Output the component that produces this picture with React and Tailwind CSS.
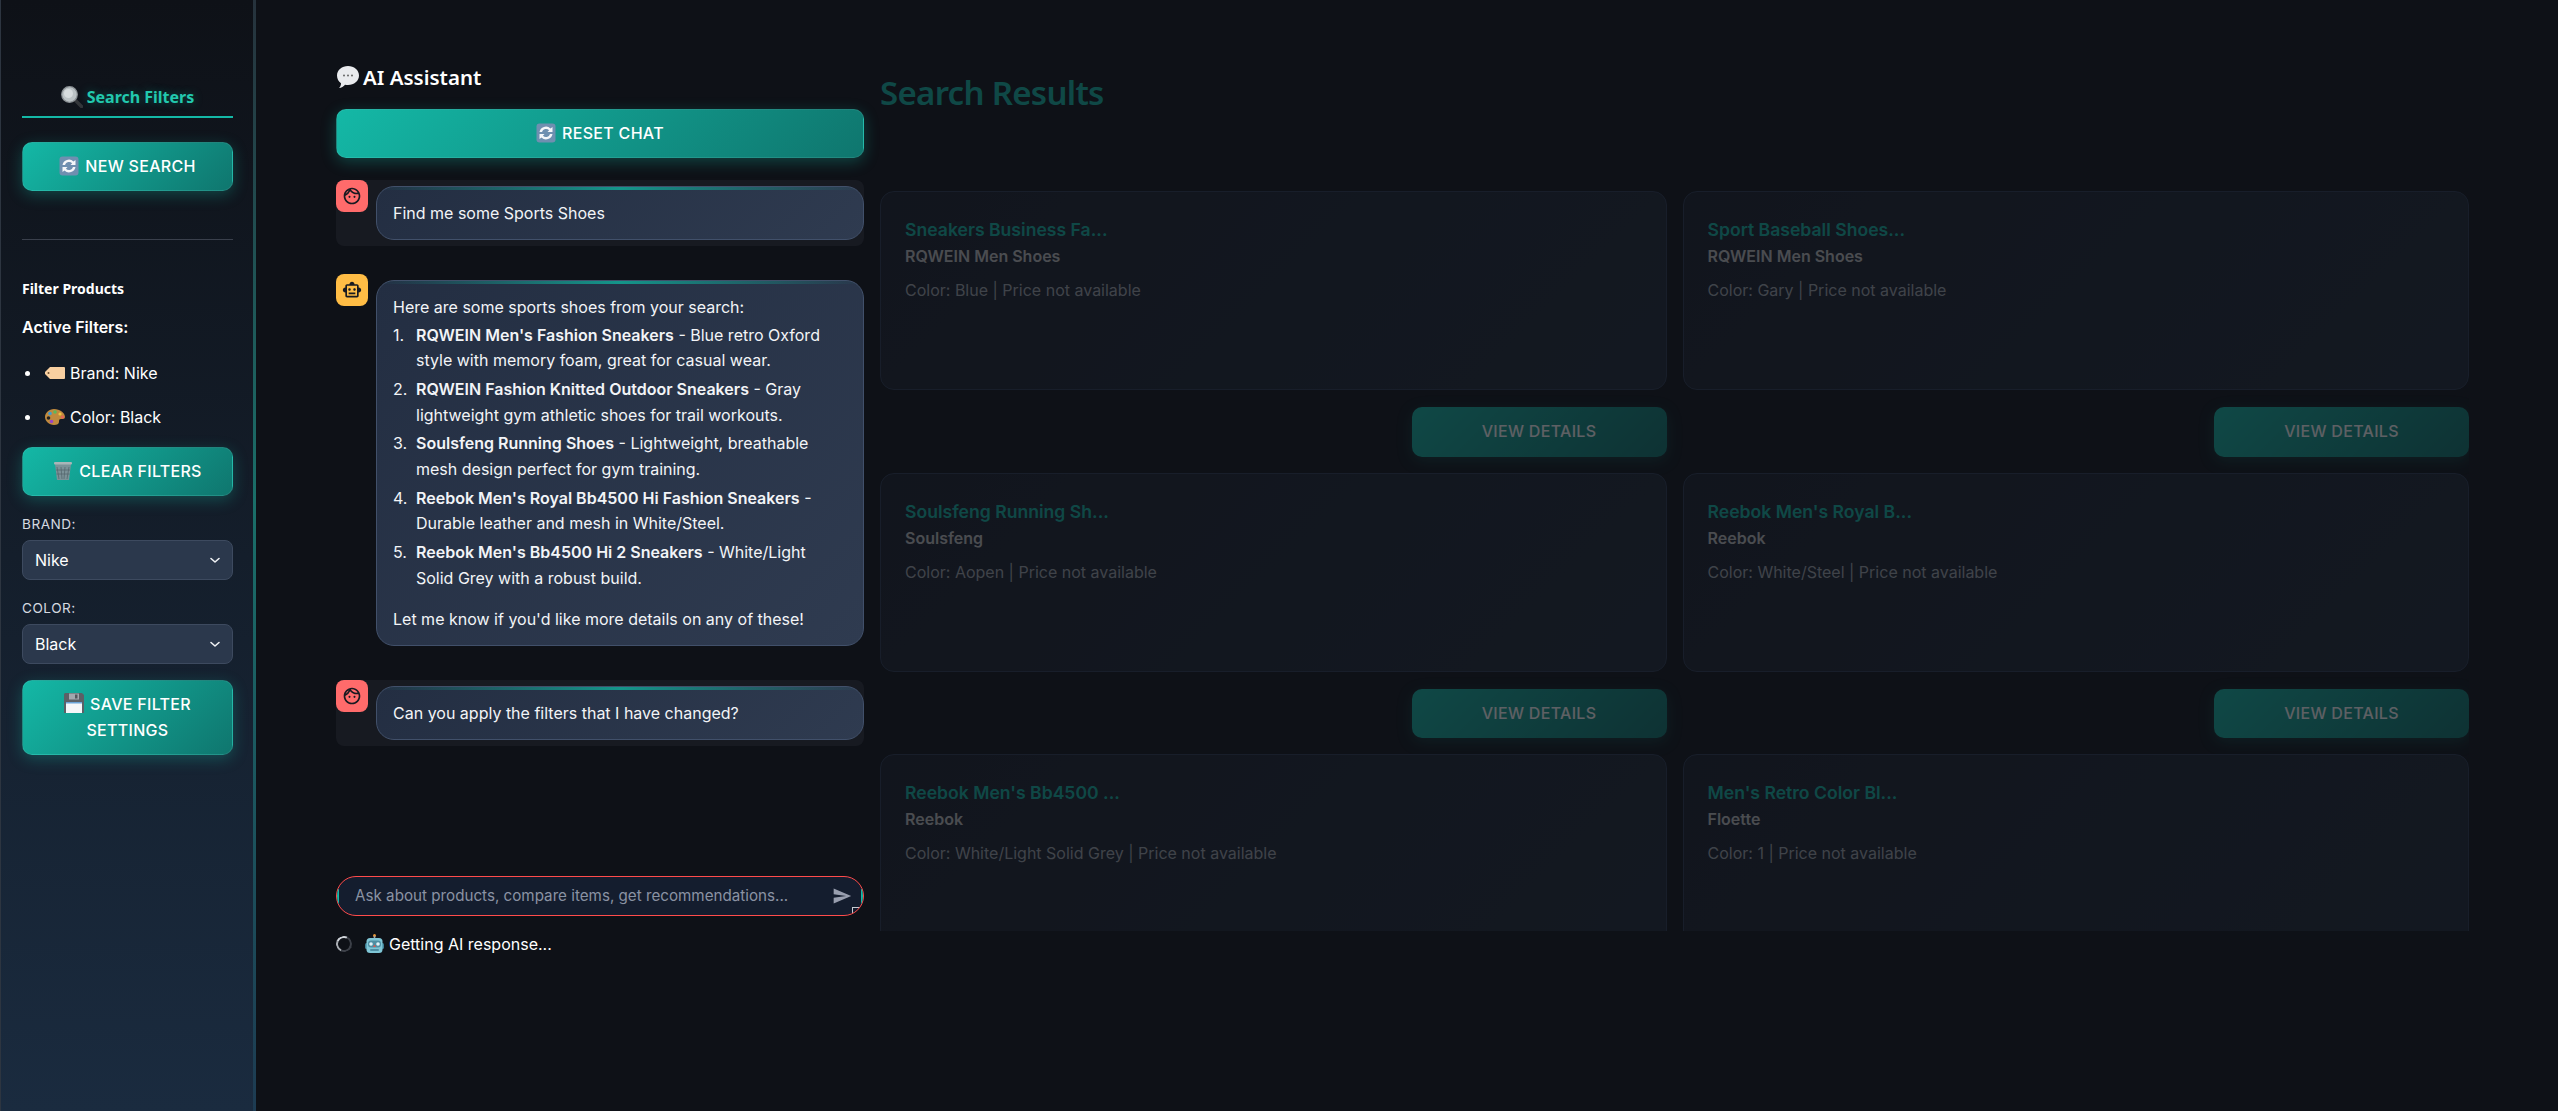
import React from "react";
import { MdOutlineFace, MdOutlineSmartToy, MdSend } from "react-icons/md";

const inter = "font-['Inter',sans-serif]";
const noto = "font-['Noto_Sans',sans-serif]";

const Refresh = () => (
  <svg width="20" height="20" viewBox="0 0 20 20" className="inline-block align-[-4px] mr-[6px]">
    <rect x="0.5" y="0.5" width="19" height="19" rx="3" fill="#6f8fb0" />
    <path d="M3.500 9a6.500 6.500 0 0 1 11-3.500L16.500 4v5h-5l1.600-1.700A4.200 4.200 0 0 0 6 9z" fill="#f4f6f9" />
    <path d="M16.500 11a6.500 6.500 0 0 1-11 3.500L3.500 16v-5h5l-1.600 1.700A4.200 4.200 0 0 0 14 11z" fill="#f4f6f9" />
  </svg>
);
const Magnifier = () => (
  <svg width="22" height="22" viewBox="0 0 22 22" className="shrink-0 mr-[4px]">
    <path d="M13.500 13.500l7 7" stroke="#33363a" strokeWidth="3.500" strokeLinecap="round" />
    <circle cx="8.500" cy="8.500" r="7.800" fill="#bcc3c6" stroke="#8b9195" strokeWidth="1.200" />
    <circle cx="7.500" cy="7.500" r="4.500" fill="#d7dcde" />
  </svg>
);
const Tag = () => (
  <svg width="20" height="14" viewBox="0 0 20 14" className="inline-block align-[-1px] mr-[5px]">
    <path d="M5 1h14a1 1 0 0 1 1 1v10a1 1 0 0 1-1 1H5L0 8V6z" fill="#f8cfa0" />
    <circle cx="3.500" cy="7" r="1" fill="#6b4d2b" />
  </svg>
);
const Palette = () => (
  <svg width="20" height="16" viewBox="0 0 20 16" className="inline-block align-[-2px] mr-[5px]">
    <path d="M9 0c6 0 11 4 11 8 0 2-2 2-4 2s-2 1-2 3-2 3-5 3C4 16 0 12 0 8s4-8 9-8z" fill="#c08a3e" />
    <circle cx="5" cy="4.500" r="1.800" fill="#3f9ad6" />
    <circle cx="10" cy="3" r="1.800" fill="#5cb85c" />
    <circle cx="15" cy="5" r="1.600" fill="#f0c040" />
    <circle cx="3.500" cy="9" r="1.800" fill="#222" />
    <circle cx="6.500" cy="12.500" r="1.800" fill="#9a45c4" />
    <circle cx="17.500" cy="8" r="1.500" fill="#e8645a" />
  </svg>
);
const Trash = () => (
  <svg width="20" height="20" viewBox="0 0 20 20" className="inline-block align-[-4px] mr-[6px]">
    <path d="M2 3h16l-2 16H4z" fill="#7b9298" />
    <rect x="1" y="1" width="18" height="2.500" rx="1" fill="#a9b5b8" />
    <path d="M4 6l2 12M8 6l1 12M12 6l-1 12M16 6l-2 12M3 9h14M3.500 13h13" stroke="#56686e" strokeWidth="0.800" fill="none" />
  </svg>
);
const Floppy = () => (
  <svg width="20" height="20" viewBox="0 0 20 20" className="inline-block align-[-3px] mr-[6px]">
    <path d="M1 0h17l2 2v18H0V1z" fill="#5c6066" />
    <rect x="5" y="0.500" width="10" height="6" fill="#a3a8ae" />
    <rect x="11" y="1.500" width="2.500" height="4" fill="#55595e" />
    <rect x="2" y="9" width="16" height="11" fill="#f5f6f8" />
    <rect x="2" y="9" width="16" height="1.500" fill="#6ca4d8" />
  </svg>
);
const Bubble = () => (
  <svg width="24" height="24" viewBox="0 0 24 24" className="inline-block align-[-4px] mr-[3px]">
    <path d="M12 1c6 0 11 4 11 9.500S18 20 12 20c-1 0-2 0-3-.3C7.500 21.500 5.500 23 3 23c1.500-1.300 2-3 2-4.700C2.500 16.500 1 13.700 1 10.500 1 5 6 1 12 1z" fill="#e9ebee" />
    <circle cx="8" cy="10.500" r="1" fill="#666" />
    <circle cx="12" cy="10.500" r="1" fill="#666" />
    <circle cx="16" cy="10.500" r="1" fill="#666" />
  </svg>
);
const Robot = () => (
  <svg width="19" height="20" viewBox="0 0 19 20" className="shrink-0">
    <circle cx="9.500" cy="1.500" r="1.500" fill="#e8983a" />
    <rect x="8.700" y="2" width="1.600" height="3" fill="#9aa6ad" />
    <rect x="0" y="9" width="19" height="6" rx="1.500" fill="#3d7f94" />
    <rect x="1.500" y="4" width="16" height="15" rx="3.500" fill="#7fc6d6" />
    <rect x="3" y="6.500" width="13" height="7" rx="3" fill="#4e8fa3" />
    <circle cx="6" cy="10" r="1.800" fill="#dff3f8" />
    <circle cx="13" cy="10" r="1.800" fill="#dff3f8" />
    <path d="M9.500 10.500l1.500 2.500H8z" fill="#d9574f" />
    <rect x="5" y="15" width="9" height="2" rx="1" fill="#4e8fa3" />
  </svg>
);

const btn =
  `flex items-center justify-center text-center w-full rounded-[10px] border border-[#ffffff14] bg-[linear-gradient(135deg,#14b8a6_0%,#0f766e_100%)] text-white ${inter} text-[16px] font-medium tracking-[0.3px] shadow-[0_4px_15px_rgba(20,184,166,0.3)] pb-[1px]`;

function Message({ user, children }) {
  return (
    <div className={`flex items-start gap-2 rounded-lg ${user ? "bg-[#171a21]" : ""}`}>
      <div className={`flex items-center justify-center w-8 h-8 shrink-0 rounded-lg text-[#171a21] ${user ? "bg-[#ff6b6b]" : "bg-[#ffbd45]"}`}>
        {user ? <MdOutlineFace size={20} /> : <MdOutlineSmartToy size={20} />}
      </div>
      <div className="relative flex-1 overflow-hidden my-[6px] rounded-[18px] border border-[#41506a] bg-[linear-gradient(135deg,#232e42_0%,#2f3b50_100%)] px-4 pt-[14px] pb-[12.4px] text-[16px] leading-[25.6px] text-[#f2f4f7]">
        <div className="absolute left-0 right-0 top-0 h-[3px] bg-[linear-gradient(90deg,transparent,#14958a,transparent)]" />
        {children}
      </div>
    </div>
  );
}

const items = [
  ["RQWEIN Men's Fashion Sneakers", "Blue retro Oxford style with memory foam, great for casual wear."],
  ["RQWEIN Fashion Knitted Outdoor Sneakers", "Gray lightweight gym athletic shoes for trail workouts."],
  ["Soulsfeng Running Shoes", "Lightweight, breathable mesh design perfect for gym training."],
  ["Reebok Men's Royal Bb4500 Hi Fashion Sneakers", "Durable leather and mesh in White/Steel."],
  ["Reebok Men's Bb4500 Hi 2 Sneakers", "White/Light Solid Grey with a robust build."],
];

const products = [
  ["Sneakers Business Fa...", "RQWEIN Men Shoes", "Blue"],
  ["Sport Baseball Shoes...", "RQWEIN Men Shoes", "Gary"],
  ["Soulsfeng Running Sh...", "Soulsfeng", "Aopen"],
  ["Reebok Men's Royal B...", "Reebok", "White/Steel"],
  ["Reebok Men's Bb4500 ...", "Reebok", "White/Light Solid Grey"],
  ["Men's Retro Color Bl...", "Floette", "1"],
];

function Select({ label, value }) {
  return (
    <div>
      <div className="mt-5 text-[13.6px] leading-4 tracking-[0.5px] text-[#d5d9e0]">{label}</div>
      <div className="mt-2 flex items-center justify-between h-10 rounded-[8px] border border-[#3d4a5f] bg-[#2b384c] pl-3 pr-[10px] text-[16px] text-white">
        <span>{value}</span>
        <svg width="14" height="14" viewBox="0 0 14 14" fill="none" stroke="#f0f2f5" strokeWidth="1.600" strokeLinecap="round" strokeLinejoin="round">
          <path d="M3 5.500l4 3.500 4-3.500" />
        </svg>
      </div>
    </div>
  );
}

function Card({ title, brand, color, action }) {
  return (
    <div>
      <div className="h-[199px] rounded-[14px] border border-[#2d3a52] bg-[linear-gradient(135deg,#1a1f2b_0%,#1f2937_100%)] px-6 pt-[26px]">
        <div className="text-[17.6px] leading-6 font-semibold text-[#14b8a6]">{title}</div>
        <div className="mt-[2px] text-[16px] leading-6 font-semibold text-[#c4c4c4]">{brand}</div>
        <div className="mt-[10px] text-[16px] leading-6 text-[#a4a8b0]">Color: {color} | Price not available</div>
      </div>
      {action && (
        <div className="flex justify-end mt-[17px]">
          <div className="flex items-center justify-center w-[255px] h-[49.5px] rounded-[10px] bg-[linear-gradient(135deg,#14b8a6_0%,#0f766e_100%)] text-[16px] font-medium tracking-[0.3px] text-white pb-[1px] shadow-[0_4px_15px_rgba(20,184,166,0.25)]">
            VIEW DETAILS
          </div>
        </div>
      )}
    </div>
  );
}

export default function App() {
  return (
    <div className={`flex h-[1111px] w-full overflow-hidden bg-[#0e1117] text-white ${inter}`}>
      <aside className="flex w-[256px] shrink-0">
        <div className="w-[253px] border-l border-[#2d3540] bg-[linear-gradient(180deg,#0e1117_0%,#1a2b3f_100%)] pl-[21px] pr-[20px] pt-[82px] text-[16px]">
          <div className={`flex items-center justify-center h-[36px] border-b-2 border-[#14b8a6] pb-[5px] ${noto} text-[16px] font-bold text-[#22c9ae] [text-shadow:0_0_10px_rgba(20,184,166,0.4)]`}>
            <Magnifier />Search Filters
          </div>
          <div className={`${btn} h-[49px] mt-6`}><span><Refresh />NEW SEARCH</span></div>
          <div className="mt-12 h-px bg-[#3a404c]" />
          <div className={`mt-[39px] ${noto} text-[14px] leading-5 font-bold`}>Filter Products</div>
          <div className="mt-[18px] leading-5 font-semibold text-[16px]">Active Filters:</div>
          <ul className="mt-[26px] list-none">
            <li className="flex items-center h-5">
              <span className="w-[5px] h-[5px] ml-[3px] mr-[15px] rounded-full bg-white" />
              <Tag />Brand: Nike
            </li>
            <li className="flex items-center h-5 mt-6">
              <span className="w-[5px] h-[5px] ml-[3px] mr-[15px] rounded-full bg-white" />
              <Palette />Color: Black
            </li>
          </ul>
          <div className={`${btn} h-[49px] mt-5`}><span><Trash />CLEAR FILTERS</span></div>
          <Select label="BRAND:" value="Nike" />
          <Select label="COLOR:" value="Black" />
          <div className={`${btn} h-[75px] mt-4 leading-[26px] px-4`}><span><Floppy />SAVE FILTER SETTINGS</span></div>
        </div>
        <div className="w-[3px] bg-[linear-gradient(180deg,#26323c_0%,#1a6f69_45%,#1d3b52_100%)]" />
      </aside>

      <main className="flex flex-1 gap-4 pl-20 pr-[89px]">
        <section className="w-[528px] shrink-0 pt-[62px]">
          <div className={`h-8 leading-[30px] ${noto} text-[20.5px] font-semibold`}><Bubble />AI Assistant</div>
          <div className={`${btn} h-[49px] mt-[15px]`}><span><Refresh />RESET CHAT</span></div>
          <div className="mt-[22px]">
            <Message user>Find me some Sports Shoes</Message>
          </div>
          <div className="mt-7">
            <Message>
              <p>Here are some sports shoes from your search:</p>
              <ol className="mt-[2px] mb-4">
                {items.map(([b, t], i) => (
                  <li key={b} className={`flex ${i ? "mt-[3.2px]" : ""}`}>
                    <span className="w-[23px] shrink-0">{i + 1}.</span>
                    <span><strong className="font-semibold">{b}</strong> - {t}</span>
                  </li>
                ))}
              </ol>
              <p>Let me know if you'd like more details on any of these!</p>
            </Message>
          </div>
          <div className="mt-7">
            <Message user>Can you apply the filters that I have changed?</Message>
          </div>
          <div className="relative flex items-center justify-between h-10 mt-[130px] rounded-[20px] border border-[#ff4b4b] bg-[#141d2e] pl-[18px] pr-[11px] overflow-hidden">
            <span className="absolute left-0 top-[12px] h-[16px] w-[2px] bg-[#14b8a6]" />
            <span className="absolute right-0 top-[12px] h-[16px] w-[2px] bg-[#14b8a6]" />
            <span className="absolute right-[3px] bottom-0 w-[8px] h-[8px] border-l border-t border-[#c8ccd4]" />
            <span className="text-[15.2px] text-[#8a92a3]">Ask about products, compare items, get recommendations...</span>
            <MdSend size={20} className="text-[#989eae]" />
          </div>
          <div className="flex items-center h-4 mt-5 text-[16px]">
            <span className="w-4 h-4 rounded-full border-2 border-[#3c4048] border-t-[#d0d4da] border-l-[#a8acb2] rotate-[-20deg]" />
            <span className="ml-[13px] mr-[5px]"><Robot /></span>
            <span>Getting AI response...</span>
          </div>
        </section>

        <section className="flex-1 min-w-0 opacity-[0.33]">
          <h1 className={`pt-[68px] h-[191px] ${noto} text-[33px] leading-[50px] font-semibold tracking-[-0.7px] text-[#14b8a6]`}>Search Results</h1>
          <div className="h-[740px] overflow-hidden">
            <div className="grid grid-cols-2 gap-x-4 gap-y-4">
              {products.map(([t, b, c], i) => (
                <Card key={t} title={t} brand={b} color={c} action={i < 4} />
              ))}
            </div>
          </div>
        </section>
      </main>
    </div>
  );
}
